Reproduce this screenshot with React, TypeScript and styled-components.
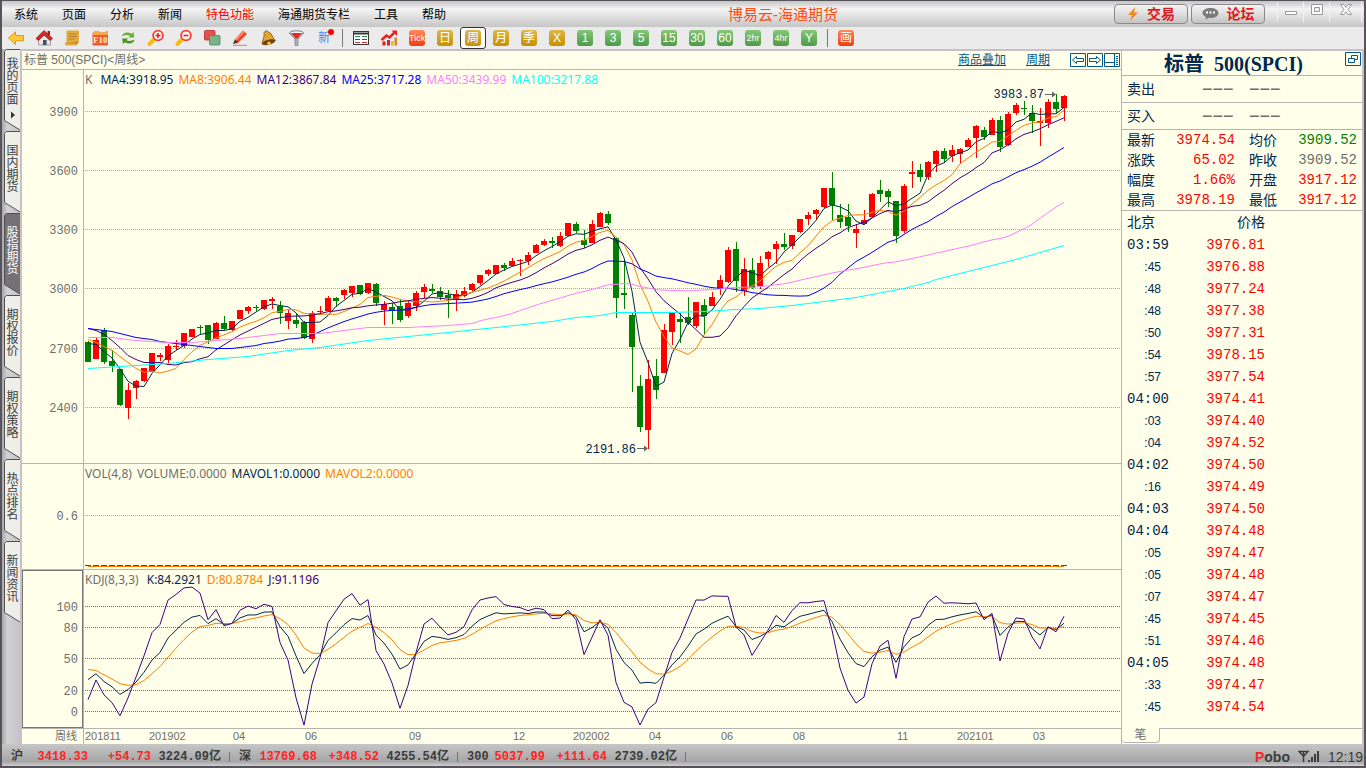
import React from "react";
import styled, { createGlobalStyle, css } from "styled-components";

const CJK = `"Noto Sans CJK SC"`;
const SANS = `"Liberation Sans", ${CJK}, sans-serif`;
const MONO = `"Liberation Mono", ${CJK}, monospace`;
const LEGEND = `"Noto Sans", ${CJK}, sans-serif`;

const color = {
  paper: "#ffffea",
  rule: "#b4b4b4",
  navy: "#002850",
  orange: "#ff8000",
  purple: "#400080",
  blue: "#0000ff",
  pink: "#ff80ff",
  cyan: "#00ffff",
  red: "#ff0000",
  green: "#008000",
  grey: "#6e6e6e",
  link: "#005a8c",
};

const GlobalStyle = createGlobalStyle`
  *, *::before, *::after { box-sizing: border-box; }
  body { margin: 0; background: #555; font-family: ${SANS}; }
  button { font: inherit; color: inherit; background: none; border: 0; padding: 0; cursor: pointer; }
  svg { display: block; }
`;

/* ---------- window frame ---------- */

const Frame = styled.div`
  min-height: 100vh;
  display: flex;
  flex-direction: column;
  border: 2px solid #56545a;
  border-top-width: 1px;
  background: #c8c8ca;
`;

const TitleBar = styled.header`
  display: flex;
  height: 26px;
  align-items: center;
  background: linear-gradient(#c4c4c4, #f4f4f4 30%, #e4e4e4 55%, #c6c6c6);
`;

const Menu = styled.nav`
  display: flex;
  gap: 24px;
  padding: 2px 0 0 12px;
  font: 12px/16px ${SANS};
`;

const MenuItem = styled.button<{ $hot?: boolean }>`
  color: ${(p) => (p.$hot ? color.red : "#000")};
  white-space: nowrap;
`;

const AppTitle = styled.h1`
  flex: 1;
  margin: 0;
  padding: 2px 0 0 6px;
  text-align: center;
  font: 15px/20px ${SANS};
  color: #ff4f10;
`;

const TitleActions = styled.div`
  display: flex;
  gap: 3px;
`;

const ActionButton = styled.button`
  && {
    display: flex;
    align-items: center;
    justify-content: center;
    gap: 8px;
    width: 74px;
    height: 20px;
    border: 1px solid #8a8a8a;
    border-radius: 4px;
    background: linear-gradient(#f4f4f4, #dedede 50%, #c4c4c4);
    font: bold 14px/18px ${SANS};
    color: #e01818;
  }
`;

const WindowControls = styled.div`
  display: flex;
  height: 20px;
  align-self: flex-start;
  margin: 1px 2px 0 12px;
`;

const WindowButton = styled.button`
  && {
    display: flex;
    align-items: flex-start;
    justify-content: center;
    width: 26px;
    padding-top: 2px;
    border-left: 1px solid #f2f2f2;
  }
  &&:last-child {
    width: 33px;
    border-right: 1px solid #f2f2f2;
  }
`;

/* ---------- toolbar ---------- */

const Toolbar = styled.div`
  display: flex;
  height: 22px;
  gap: 2px;
  padding-left: 1px;
  background: #ebebeb;
`;

const Tool = styled.button<{ $active?: boolean }>`
  && {
    display: flex;
    width: 26px;
    height: 22px;
    align-items: center;
    justify-content: center;
    ${(p) =>
      p.$active &&
      css`
        border: 1px solid #333;
        border-radius: 3px;
        background: #fff;
      `}
  }
`;

const Divider = styled.span`
  width: 7px;
  height: 18px;
  margin-top: 2px;
  background: linear-gradient(#777, #777) center / 1px 100% no-repeat;
`;

const tileFill = {
  gold: "linear-gradient(#dcb848, #c89000)",
  green: "linear-gradient(#86c878, #4e9a48)",
  red: "linear-gradient(#ff8a5a, #ee3c14)",
};

const Tile = styled.span<{ $tone: keyof typeof tileFill; $small?: boolean }>`
  display: block;
  width: 16px;
  height: 16px;
  border-radius: 3px;
  overflow: hidden;
  background: ${(p) => tileFill[p.$tone]};
  color: #fff;
  font: ${(p) => (p.$small ? 9 : 12)}px/16px ${SANS};
  text-align: center;
  white-space: nowrap;
`;

const NewMark = styled.span`
  position: relative;
  font: 12px/16px ${SANS};
  color: #3c8cf0;
  &::after {
    content: "";
    position: absolute;
    top: -1px;
    right: -4px;
    width: 6px;
    height: 6px;
    border-radius: 50%;
    background: #ff0000;
  }
`;

/* ---------- workspace ---------- */

const Workspace = styled.div`
  flex: 1;
  display: flex;
`;

const SideTabs = styled.nav`
  width: 18px;
  padding-left: 2px;
  background: linear-gradient(90deg, #a8a8ac, #d2d2d4 30%, #c4c4c8);
`;

const SideTab = styled.button<{ $active?: boolean; $lift?: boolean }>`
  && {
    position: relative;
    display: flex;
    align-items: flex-start;
    width: 16px;
    height: 82px;
    padding-top: ${(p) => (p.$lift ? 8 : 13)}px;
    color: ${(p) => (p.$active ? "#fff" : "#404040")};
  }
  & > svg {
    position: absolute;
    inset: 0;
  }
`;

const SideLabel = styled.span`
  position: relative;
  display: block;
  writing-mode: vertical-rl;
  width: 16px;
  font: 12px/16px ${CJK}, sans-serif;
`;

const Content = styled.main`
  flex: 1;
  min-width: 0;
  display: flex;
  border: solid #c8c0c4;
  border-width: 2px 2px 0 2px;
  background: ${color.paper};
`;

const ChartColumn = styled.section`
  flex: 1;
  min-width: 0;
  display: flex;
  flex-direction: column;
  border-right: 1px solid ${color.rule};
`;

const ChartHeader = styled.div`
  display: flex;
  height: 19px;
  align-items: center;
  padding: 0 1px 0 2px;
  border-bottom: 1px solid ${color.rule};
  font: 12px/16px ${SANS};
  color: ${color.grey};
`;

const ChartName = styled.h2`
  flex: 1;
  margin: 0;
  font: 12px/16px ${SANS};
`;

const HeaderLink = styled.a`
  margin-right: 20px;
  color: ${color.link};
  text-decoration: underline;
`;

const LayoutButtons = styled.div`
  display: flex;
  gap: 1px;
`;

const Pane = styled.div<{ $ruled?: boolean }>`
  position: relative;
  border-bottom: ${(p) => (p.$ruled ? `1px solid ${color.rule}` : "0")};
`;

const Legend = styled.div`
  position: absolute;
  top: 2px;
  left: 63px;
  display: flex;
  gap: 5px;
  font: 12px/16px ${LEGEND};
  white-space: nowrap;
`;

const LegendItem = styled.span<{ $tone: string; $wide?: boolean }>`
  color: ${(p) => p.$tone};
  margin-right: ${(p) => (p.$wide ? "3px" : "0")};
`;

const Plot = styled.svg`
  width: 100%;
  overflow: hidden;
`;

const AxisText = styled.text`
  font: 12px ${MONO};
  fill: ${color.grey};
  text-anchor: end;
`;

const CalloutText = styled.text`
  font: 12px ${MONO};
  fill: ${color.navy};
  text-anchor: end;
`;

const DateText = styled.text`
  font: 11px ${SANS};
  fill: ${color.grey};
`;

/* ---------- quote panel ---------- */

const QuoteColumn = styled.aside`
  width: 240px;
  display: flex;
  flex-direction: column;
  color: ${color.navy};
`;

const QuoteHeader = styled.div`
  display: flex;
  height: 25px;
  align-items: flex-start;
  padding: 1px 1px 0 0;
  border-bottom: 1px solid ${color.rule};
`;

const QuoteTitle = styled.h2`
  flex: 1;
  margin: 0;
  text-align: center;
  white-space: pre;
  font: bold 20px/24px "Liberation Serif", ${CJK}, serif;
`;

const DepthRow = styled.div`
  display: flex;
  height: 27px;
  align-items: center;
  padding-left: 5px;
  border-bottom: 1px solid ${color.rule};
  font: 14px/20px ${SANS};
`;

const DepthLabel = styled.span`
  width: 75px;
`;

const DepthValue = styled.span`
  width: 47px;
  color: ${color.grey};
  font: 18px/20px ${SANS};
`;

const StatTable = styled.table`
  width: 100%;
  border-collapse: collapse;
  table-layout: fixed;
  border-bottom: 1px solid ${color.rule};
  th,
  td {
    height: 20px;
    padding: 0;
    line-height: 20px;
  }
  th {
    padding-left: 5px;
    text-align: left;
    font: 14px/20px ${SANS};
  }
  th + td + th {
    padding-left: 14px;
  }
  td:last-child {
    padding-right: 5px;
  }
`;

const StatValue = styled.td<{ $tone: string }>`
  text-align: right;
  font: 14px/20px ${MONO};
  color: ${(p) => p.$tone};
`;

const TickTable = styled.table`
  align-self: flex-start;
  border-collapse: collapse;
  th,
  td {
    height: 22px;
    padding: 0;
  }
  th {
    font: 14px/22px ${SANS};
  }
  th:first-child {
    width: 47px;
    padding-left: 5px;
    text-align: left;
  }
  th:last-child {
    width: 96px;
    text-align: right;
  }
`;

const TickTime = styled.td<{ $minute?: boolean }>`
  && {
    padding: 2px ${(p) => (p.$minute ? "0" : "8px")} 0 5px;
  }
  text-align: ${(p) => (p.$minute ? "left" : "right")};
  font: ${(p) => (p.$minute ? `14px/20px ${MONO}` : `12px/20px ${SANS}`)};
`;

const TickPrice = styled.td`
  && {
    padding-top: 2px;
  }
  text-align: right;
  font: 14px/20px ${MONO};
  color: ${color.red};
`;

const BottomTabs = styled.div`
  display: flex;
  margin-top: auto;
  height: 16px;
  &::after {
    content: "";
    flex: 1;
    border-top: 1px solid ${color.rule};
  }
`;

const BottomTab = styled.button`
  && {
    width: 38px;
    height: 15px;
    border: solid ${color.rule};
    border-width: 0 1px 1px 0;
    border-radius: 0 0 4px 4px;
    color: ${color.grey};
    font: 12px/14px ${SANS};
  }
`;

/* ---------- status bar ---------- */

const StatusBar = styled.footer`
  display: flex;
  height: 22px;
  align-items: center;
  padding: 3px 1px 0 9px;
  background: linear-gradient(#c6c6c6, #a6a6a6 80%, #d0d0d0);
  color: #3c3c3c;
  font: bold 12px/18px ${MONO};
  white-space: nowrap;
`;

const IndexGroup = styled.div`
  display: flex;
  &::after {
    content: "";
    width: 1px;
    height: 10px;
    margin: 4px 9px 0 8px;
    background: #777;
  }
`;

const IndexCell = styled.span<{ $w: number; $up?: boolean }>`
  width: ${(p) => p.$w}px;
  text-align: right;
  color: ${(p) => (p.$up ? "#ff2424" : "#3c3c3c")};
  &:first-child {
    text-align: left;
  }
`;

const StatusRight = styled.div`
  display: flex;
  align-items: center;
  gap: 8px;
  margin-left: auto;
`;

const Brand = styled.span`
  font: bold 14px/18px ${SANS};
  &::first-letter {
    color: #ff2424;
  }
  display: inline-block;
`;

const Clock = styled.time`
  font: 14px/18px ${SANS};
`;

/* ---------- data ---------- */

type Candle = [dir: "u" | "d", top: number, bottom: number, high: number, low: number];

// Weekly candles in plot rows (smaller is higher); u closes at the body top, d at its bottom.
const candles: Candle[] = [
  ["d", 342, 362, 341, 362], ["u", 340, 359, 337, 359], ["d", 330, 362, 328, 364], ["d", 361, 366, 350, 372],
  ["d", 369, 405, 369, 406], ["u", 390, 408, 383, 419], ["u", 381, 388, 380, 399], ["u", 368, 381, 368, 382],
  ["u", 353, 372, 353, 372], ["u", 355, 357, 353, 361], ["u", 346, 360, 344, 363], ["u", 346, 347, 340, 350],
  ["u", 333, 346, 333, 348], ["u", 329, 337, 329, 337], ["d", 327, 328, 325, 334], ["d", 325, 340, 325, 344],
  ["u", 323, 339, 322, 339], ["d", 323, 329, 316, 330], ["u", 321, 330, 321, 331], ["u", 310, 319, 310, 319],
  ["u", 307, 311, 306, 314], ["d", 307, 308, 305, 311], ["u", 300, 309, 300, 310], ["u", 299, 301, 297, 309],
  ["d", 306, 313, 301, 324], ["u", 313, 321, 310, 329], ["d", 320, 324, 314, 328], ["d", 322, 338, 321, 339],
  ["u", 313, 339, 311, 343], ["u", 311, 312, 306, 314], ["u", 298, 311, 296, 311], ["d", 298, 301, 297, 307],
  ["u", 290, 295, 289, 299], ["u", 286, 293, 286, 297], ["d", 285, 294, 285, 295], ["u", 283, 293, 283, 294],
  ["d", 284, 303, 283, 306], ["u", 304, 310, 301, 325], ["d", 307, 311, 303, 324], ["d", 306, 320, 300, 322],
  ["u", 303, 316, 300, 318], ["u", 293, 306, 291, 311], ["u", 287, 292, 284, 298], ["d", 289, 291, 284, 293],
  ["d", 291, 297, 287, 300], ["d", 295, 298, 290, 318], ["u", 294, 300, 290, 311], ["u", 291, 296, 287, 297],
  ["u", 284, 290, 283, 291], ["u", 275, 283, 275, 285], ["u", 270, 274, 269, 276], ["u", 265, 274, 265, 274],
  ["d", 265, 268, 263, 271], ["u", 261, 266, 258, 266], ["u", 260, 261, 259, 276], ["u", 255, 261, 252, 265],
  ["u", 245, 253, 244, 253], ["u", 241, 245, 239, 246], ["d", 241, 243, 237, 248], ["u", 236, 246, 232, 247],
  ["u", 223, 236, 223, 236], ["d", 224, 231, 222, 233], ["d", 240, 245, 230, 248], ["u", 224, 243, 220, 243],
  ["u", 213, 227, 212, 227], ["d", 214, 223, 211, 225], ["d", 238, 298, 237, 318], ["d", 293, 295, 260, 309],
  ["d", 315, 347, 312, 392], ["d", 386, 427, 375, 432], ["u", 379, 430, 360, 449], ["d", 376, 390, 359, 399],
  ["u", 330, 373, 324, 373], ["u", 313, 332, 313, 345], ["d", 319, 322, 313, 343], ["d", 317, 323, 297, 325],
  ["u", 302, 326, 302, 328], ["d", 305, 316, 299, 335], ["u", 297, 306, 292, 306], ["u", 280, 289, 275, 295],
  ["u", 250, 282, 247, 283], ["d", 249, 281, 242, 292], ["u", 269, 291, 258, 296], ["d", 270, 288, 258, 289],
  ["u", 263, 286, 256, 289], ["u", 252, 259, 251, 267], ["u", 244, 249, 241, 264], ["d", 244, 247, 233, 250],
  ["u", 235, 246, 235, 249], ["u", 219, 232, 219, 233], ["u", 215, 219, 212, 225], ["u", 210, 214, 209, 219],
  ["u", 188, 207, 188, 208], ["d", 188, 205, 172, 220], ["d", 215, 222, 204, 228], ["d", 217, 226, 204, 232],
  ["u", 229, 233, 224, 248], ["u", 220, 224, 210, 224], ["u", 194, 217, 193, 217], ["d", 190, 194, 180, 202],
  ["d", 191, 197, 189, 207], ["d", 201, 236, 201, 243], ["u", 186, 231, 184, 233], ["u", 172, 174, 161, 188],
  ["d", 170, 177, 164, 182], ["u", 162, 177, 161, 180], ["u", 151, 164, 150, 172], ["d", 151, 159, 148, 163],
  ["u", 150, 156, 145, 162], ["u", 149, 154, 148, 163], ["u", 140, 147, 138, 147], ["u", 126, 138, 125, 158],
  ["d", 130, 137, 127, 140], ["u", 120, 135, 118, 135], ["d", 120, 147, 116, 152], ["u", 114, 145, 112, 146],
  ["u", 105, 113, 103, 115], ["d", 108, 109, 101, 115], ["d", 113, 121, 105, 133], ["u", 121, 123, 108, 146],
  ["u", 102, 123, 99, 128], ["d", 102, 109, 94, 113], ["u", 96, 108, 95, 121],
];

type Point = [index: number, y: number];

const PRICE_TOP = 70;
const KDJ_TOP = 570;
const slotX = (i: number) => 66 + 8 * i;
const closes = candles.map(([dir, top, bottom]) => (dir === "u" ? top : bottom));

const toPath = (points: Point[], offset: number) =>
  points.map(([i, y]) => `${slotX(i)},${(y - offset + 0.5).toFixed(1)}`).join(" ");

// Averages whose window reaches before the first candle start from a stored lead-in.
const movingAverage = (span: number, lead: Point[]): Point[] => {
  const out = [...lead];
  for (let i = span - 1; i < closes.length; i++) {
    const sum = closes.slice(i - span + 1, i + 1).reduce((a, b) => a + b, 0);
    out.push([i, sum / span]);
  }
  return out;
};

const lead = (...ys: number[]): Point[] => ys.map((y, i) => [i, y]);

const averages: { tone: string; points: Point[] }[] = [
  { tone: color.navy, points: movingAverage(4, lead(343, 344, 351)) },
  { tone: color.orange, points: movingAverage(8, lead(339, 342, 346, 350, 356, 362, 368)) },
  { tone: color.purple, points: movingAverage(12, lead(328, 330, 334, 340, 347, 355, 359, 362, 362, 362, 364)) },
  {
    tone: color.blue,
    points: movingAverage(
      25,
      lead(328, 329, 330, 331, 333, 335, 337, 338, 339, 341, 342, 343, 344, 345, 346, 347, 348, 348, 348, 347, 346, 345, 343, 342),
    ),
  },
  {
    tone: color.pink,
    points: movingAverage(50, [
      [0, 337], [3, 337], [6, 340], [10, 342], [13, 342], [16, 340], [19, 338], [21, 336],
      [24, 333], [29, 333], [32, 330], [35, 327], [40, 327], [45, 325], [48, 323],
    ]),
  },
  {
    tone: color.cyan,
    points: [
      [0, 368], [4, 366], [10, 363], [15, 359], [20, 356], [25, 350], [29, 347], [35, 340], [40, 336],
      [45, 332], [51, 327], [58, 321], [61, 317], [64, 315], [66, 312], [73, 312], [77, 311], [81, 309],
      [84, 308], [88, 305], [92, 301], [96, 297], [100, 291], [102, 288], [105, 282], [106, 279],
      [110, 271], [116, 259], [122, 245],
    ],
  },
];

const kdj = (() => {
  const k = [30.4, 36, 28.6, 23.5, 16.3, 21, 28];
  const d = [40, 39, 35, 31, 26.5, 25, 25.6];
  for (let i = k.length; i < candles.length; i++) {
    const span = candles.slice(Math.max(0, i - 7), i + 1);
    const high = Math.min(...span.map((c) => c[3]));
    const low = Math.max(...span.map((c) => c[4]));
    const rsv = ((low - closes[i]) / (low - high)) * 100;
    k.push((2 * k[i - 1] + rsv) / 3);
    d.push((2 * d[i - 1] + k[i]) / 3);
  }
  const scale = (v: number) => 711 - v * 1.05;
  return {
    k: k.map((v, i): Point => [i, scale(v)]),
    d: d.map((v, i): Point => [i, scale(v)]),
    j: k.map((v, i): Point => [i, scale(3 * v - 2 * d[i])]),
  };
})();

const menuItems = ["系统", "页面", "分析", "新闻", "特色功能", "海通期货专栏", "工具", "帮助"];
const sideTabs = ["我的页面", "国内期货", "股指期货", "期权报价", "期权策略", "热点排名", "新闻资讯"];
const priceGrid: [string, number][] = [["3900", 111], ["3600", 170], ["3300", 229], ["3000", 288], ["2700", 348], ["2400", 407]];
const kdjGrid: [string, number][] = [["100", 606], ["80", 627], ["50", 658], ["20", 690], ["0", 711]];
const dates: [string, number][] = [
  ["201811", 63], ["201902", 127], ["04", 211], ["06", 283], ["09", 387], ["12", 491], ["202002", 551],
  ["04", 627], ["06", 699], ["08", 771], ["11", 875], ["202101", 935], ["03", 1011],
];
const stats: [string, string, string, string, string, string][] = [
  ["最新", "3974.54", color.red, "均价", "3909.52", color.green],
  ["涨跌", "65.02", color.red, "昨收", "3909.52", color.grey],
  ["幅度", "1.66%", color.red, "开盘", "3917.12", color.red],
  ["最高", "3978.19", color.red, "最低", "3917.12", color.red],
];
const ticks: [string, string][] = [
  ["03:59", "3976.81"], [":45", "3976.88"], [":48", "3977.24"], [":48", "3977.38"], [":50", "3977.31"],
  [":54", "3978.15"], [":57", "3977.54"], ["04:00", "3974.41"], [":03", "3974.40"], [":04", "3974.52"],
  ["04:02", "3974.50"], [":16", "3974.49"], ["04:03", "3974.50"], ["04:04", "3974.48"], [":05", "3974.47"],
  [":05", "3974.48"], [":07", "3974.47"], [":45", "3974.45"], [":51", "3974.46"], ["04:05", "3974.48"],
  [":33", "3974.47"], [":45", "3974.54"],
];

/* ---------- toolbar icons ---------- */

const Icon = ({ children }: { children: React.ReactNode }) => (
  <svg width="18" height="18" viewBox="0 0 18 18" aria-hidden="true">
    {children}
  </svg>
);

const Magnifier = ({ plus }: { plus?: boolean }) => (
  <Icon>
    <path d="M6.500 11 2.500 15" stroke="#f8bc10" strokeWidth="4" strokeLinecap="round" />
    <circle cx="11" cy="6.500" r="4.900" fill="#fff0ec" stroke="#f04038" strokeWidth="1.800" />
    <path d={plus ? "M8.500 6.500h5M11 4v5" : "M8.500 6.500h5"} stroke="#e42018" strokeWidth="1.500" />
  </Icon>
);

const pictureTools: [string, React.ReactNode][] = [
  ["后退", <Icon><path d="M1.500 9 8.500 2.800V6.500H16.500V11.800H8.500V15.500Z" fill="#ffc838" stroke="#d89c18" /></Icon>],
  ["主页", (
    <Icon>
      <path d="M3.500 9v7h12V9L9.500 4.500Z" fill="#e4e6ec" stroke="#8a8e98" strokeWidth=".8" />
      <path d="M12.500 2h2.500v4h-2.500z" fill="#b01818" />
      <path d="M1 9.500 9 1.500l8.500 8-2.500 2-6-5.500-5.500 5.500Z" fill="#d42828" stroke="#8c1010" strokeWidth=".7" />
      <path d="M8 11h3.600v5H8z" fill="#4a5260" />
    </Icon>
  )],
  ["公告", (
    <Icon>
      <path d="M3.500 1.500h12.500v11l-3 4H2.500L1.800 14l1.700-1.500Z" fill="#e4ac40" />
      <path d="M5.500 5h8.500M5.500 7.500h8.500M5.500 10h6" stroke="#b88020" />
      <path d="M2 14.500h10.500l.5 2 3-4h-3Z" fill="#c88c24" />
    </Icon>
  )],
  ["F10", (
    <Icon>
      <rect x="1.500" y="3.500" width="15.500" height="13" rx="1" fill="#f05830" />
      <path d="M2 3.500 3.500 2H8l1 1.500h5L15 2h2v4H2Z" fill="#f8a848" />
      <text x="9.300" y="13.500" textAnchor="middle" fontFamily="Liberation Serif" fontWeight="bold" fontSize="9" fill="#fff0b8">F10</text>
    </Icon>
  )],
  ["刷新", (
    <Icon>
      <path d="M3 7.500C3.500 3.500 9 2.500 12.500 4.800L14.500 3l.8 5.500H9.500l1.500-1.700C8.500 5.500 5.500 6 3 7.500Z" fill="#68b030" />
      <path d="M15.500 10.500c-.5 4-6 5-9.500 2.700L4 15l-.8-5.500H9l-1.500 1.700c2.500 1.300 5.500.800 8-.7Z" fill="#489818" />
    </Icon>
  )],
  ["放大", <Magnifier plus />],
  ["缩小", <Magnifier />],
  ["叠加", (
    <Icon>
      <rect x="1.500" y="1.500" width="10.500" height="9.500" rx="1" fill="#e85050" stroke="#b82828" strokeWidth=".8" />
      <rect x="6.500" y="6.500" width="10.500" height="9.500" rx="1" fill="#78b488" stroke="#4c8858" strokeWidth=".8" />
    </Icon>
  )],
  ["画线", (
    <Icon>
      <path d="M2.500 14.500 4 10.500 12 1.500l4 3.500L7.500 13.500Z" fill="#ec4830" />
      <path d="m2 15 2-4.500 3.500 3Z" fill="#4c342c" />
      <path d="m5 11 8-8.500" stroke="#ff9c84" strokeWidth="1.200" />
      <path d="M2 16.300h14" stroke="#f07070" />
    </Icon>
  )],
  ["预警", (
    <Icon>
      <path d="M5 3.500C6 1.500 8.500 1.500 9.500 3c4 1 3 5.500 7 8.500L3.500 15.500C2 13 6 9 5 3.500Z" fill="#e4a430" stroke="#7c5010" strokeWidth=".8" />
      <ellipse cx="9.800" cy="13.200" rx="6.500" ry="2.600" transform="rotate(-14 9.800 13.200)" fill="#70400c" />
      <circle cx="10" cy="14.200" r="1.800" fill="#f0c050" />
    </Icon>
  )],
  ["筛选", (
    <Icon>
      <path d="M2.500 4h14l-5.500 6v6.500H8V10Z" fill="#b0b4ba" stroke="#74787e" strokeWidth=".7" />
      <ellipse cx="9.500" cy="3.800" rx="6.800" ry="2" fill="#f4f4f4" stroke="#74787e" />
      <path d="M4.500 4h10l-4 5.500h-2Z" fill="#e82828" />
    </Icon>
  )],
  ["新", <NewMark>新</NewMark>],
];

const ListIcon = (
  <Icon>
    <rect x="1.500" y="2.500" width="15" height="13" fill="#fff" stroke="#383838" />
    <path d="M2 4.500h14" stroke="#383838" strokeWidth="2" />
    <path d="M3 7.500h5M10 7.500h5" stroke="#2c9050" />
    <path d="M3 10.500h5M10 10.500h5" stroke="#3848a8" />
    <path d="M3 13.500h5M10 13.500h5" stroke="#d83030" />
  </Icon>
);

const TrendIcon = (
  <Icon>
    <path d="M2.500 12.500h3v4h-3zM7 11h3v5.500H7z" fill="#d42424" />
    <path d="M11 12h2.500v4.500H11z" fill="#e8b428" />
    <path d="M14.500 8.500H17v8h-2.500z" fill="#d88428" />
    <path d="m1.500 11 5-4.500 3 2 5-5" fill="none" stroke="#ec2020" strokeWidth="2.500" />
    <path d="M11.500 1.500H17V7Z" fill="#ec2020" />
  </Icon>
);

const goldTiles = ["日", "周", "月", "季", "X"];
const greenTiles = ["1", "3", "5", "15", "30", "60", "2hr", "4hr", "Y"];

/* ---------- chart parts ---------- */

const Grid = ({ rows, offset, stroke }: { rows: [string, number][]; offset: number; stroke: string }) => (
  <g shapeRendering="crispEdges">
    {rows.map(([label, y]) => (
      <React.Fragment key={label}>
        <AxisText x={56} y={y - offset + 5}>{label}</AxisText>
        <line x1={63} x2="100%" y1={y - offset + 0.5} y2={y - offset + 0.5} stroke={stroke} strokeDasharray="1 1" />
      </React.Fragment>
    ))}
    <line x1={61.5} x2={61.5} y1={0} y2="100%" stroke={color.rule} />
  </g>
);

const Line = ({ points, tone, offset }: { points: Point[]; tone: string; offset: number }) => (
  <polyline points={toPath(points, offset)} fill="none" stroke={tone} />
);

const Arrow = ({ x, y }: { x: number; y: number }) => (
  <g>
    <path d={`M${x} ${y + 0.5}h10`} stroke="#666" />
    <path d={`M${x + 7} ${y - 2.5}l4 3-4 3Z`} fill="#666" />
  </g>
);

const PricePane = () => (
  <Pane $ruled>
    <Plot height={393}>
      <Grid rows={priceGrid} offset={PRICE_TOP} stroke="#a8a8a8" />
      <g shapeRendering="crispEdges">
        {candles.map(([dir, top, bottom, high, low], i) => (
          <g key={i} fill={dir === "u" ? color.red : color.green}>
            <rect x={slotX(i)} y={high - PRICE_TOP} width={1} height={low - high} />
            <rect x={slotX(i) - 3} y={top - PRICE_TOP} width={6} height={bottom - top} />
          </g>
        ))}
      </g>
      {averages.map((line) => (
        <Line key={line.tone} points={line.points} tone={line.tone} offset={PRICE_TOP} />
      ))}
      <CalloutText x={1022} y={28}>3983.87</CalloutText>
      <Arrow x={1023} y={24} />
      <CalloutText x={614} y={383}>2191.86</CalloutText>
      <Arrow x={615} y={378} />
    </Plot>
    <Legend>
      <LegendItem $tone={color.grey} $wide>K</LegendItem>
      <LegendItem $tone={color.navy}>MA4:3918.95</LegendItem>
      <LegendItem $tone={color.orange}>MA8:3906.44</LegendItem>
      <LegendItem $tone={color.purple}>MA12:3867.84</LegendItem>
      <LegendItem $tone={color.blue}>MA25:3717.28</LegendItem>
      <LegendItem $tone={color.pink}>MA50:3439.99</LegendItem>
      <LegendItem $tone={color.cyan}>MA100:3217.88</LegendItem>
    </Legend>
  </Pane>
);

const VolumePane = () => (
  <Pane $ruled>
    <Plot height={105}>
      <Grid rows={[["0.6", 51]]} offset={0} stroke="#a8a8a8" />
      <g shapeRendering="crispEdges">
        {candles.map(([dir], i) => (
          <rect key={i} x={slotX(i) - 3} y={101} width={6} height={1} fill={dir === "u" ? color.red : color.green} />
        ))}
        <rect x={slotX(0)} y={102} width={slotX(candles.length - 1) - slotX(0)} height={1} fill={color.orange} />
      </g>
    </Plot>
    <Legend>
      <LegendItem $tone={color.grey}>VOL(4,8)</LegendItem>
      <LegendItem $tone={color.grey}>VOLUME:0.0000</LegendItem>
      <LegendItem $tone={color.navy}>MAVOL1:0.0000</LegendItem>
      <LegendItem $tone={color.orange}>MAVOL2:0.0000</LegendItem>
    </Legend>
  </Pane>
);

const KdjPane = () => (
  <Pane $ruled>
    <Plot height={158}>
      <rect x={0.5} y={0.5} width={60} height={157} fill="none" stroke="#777" />
      <Grid rows={kdjGrid} offset={KDJ_TOP} stroke="#707070" />
      <Line points={kdj.k} tone={color.navy} offset={KDJ_TOP} />
      <Line points={kdj.d} tone={color.orange} offset={KDJ_TOP} />
      <Line points={kdj.j} tone={color.purple} offset={KDJ_TOP} />
    </Plot>
    <Legend>
      <LegendItem $tone={color.grey} $wide>KDJ(8,3,3)</LegendItem>
      <LegendItem $tone={color.navy}>K:84.2921</LegendItem>
      <LegendItem $tone={color.orange}>D:80.8784</LegendItem>
      <LegendItem $tone={color.purple}>J:91.1196</LegendItem>
    </Legend>
  </Pane>
);

const DateAxis = () => (
  <Pane>
    <Plot height={15}>
      <line x1={61.5} x2={61.5} y1={0} y2={15} stroke={color.rule} />
      <DateText x={33} y={11}>周线</DateText>
      {dates.map(([label, x]) => (
        <DateText key={x} x={x} y={11}>{label}</DateText>
      ))}
    </Plot>
  </Pane>
);

const BoxIcon = ({ d }: { d: string }) => (
  <svg width="16" height="14" viewBox="0 0 16 14" aria-hidden="true">
    <path d={`M.5.5h15v13H.5Z${d}`} fill="none" stroke={color.link} />
  </svg>
);

export default function App() {
  return (
    <Frame>
      <GlobalStyle />
      <TitleBar>
        <Menu>
          {menuItems.map((item) => (
            <MenuItem key={item} $hot={item === "特色功能"}>{item}</MenuItem>
          ))}
        </Menu>
        <AppTitle>博易云-海通期货</AppTitle>
        <TitleActions>
          <ActionButton>
            <svg width="12" height="14" viewBox="0 0 12 14" aria-hidden="true">
              <path d="M8.500 0 1 8h4L3 14l8-8.500H7Z" fill="#f08c18" />
            </svg>
            交易
          </ActionButton>
          <ActionButton>
            <svg width="17" height="14" viewBox="0 0 17 14" aria-hidden="true">
              <path d="M8.500 1C13 1 16.500 3 16.500 6S13 11 8.500 11q-1 0-2-.2L3.500 13l.5-3C2 9 .5 7.700.5 6 .5 3 4 1 8.500 1Z" fill="#7c7c7c" />
              <path d="M4 5.500h2M7.500 5.500h2M11 5.500h2" stroke="#fff" strokeWidth="2" />
            </svg>
            论坛
          </ActionButton>
        </TitleActions>
        <WindowControls>
          <WindowButton aria-label="最小化">
            <svg width="14" height="12" viewBox="0 0 14 12"><path d="M1.500 7.500h11v3h-11z" fill="#fff" stroke="#999" /></svg>
          </WindowButton>
          <WindowButton aria-label="最大化">
            <svg width="14" height="12" viewBox="0 0 14 12"><path d="M1.500.5h11v10h-11zM4.500 3.500h5v4h-5z" fill="#fff" fillRule="evenodd" stroke="#999" /></svg>
          </WindowButton>
          <WindowButton aria-label="关闭">
            <svg width="14" height="12" viewBox="0 0 14 12"><path d="M1.500.5h3.500l2 3 2-3h3.500l-3.500 5 3.500 5H9l-2-3-2 3H1.500l3.500-5Z" fill="#fff" stroke="#999" /></svg>
          </WindowButton>
        </WindowControls>
      </TitleBar>

      <Toolbar>
        {pictureTools.map(([name, icon]) => (
          <Tool key={name} aria-label={name}>{icon}</Tool>
        ))}
        <Divider />
        <Tool aria-label="报价">{ListIcon}</Tool>
        <Tool aria-label="走势">{TrendIcon}</Tool>
        <Tool><Tile $tone="red" $small>Tick</Tile></Tool>
        {goldTiles.map((t) => (
          <Tool key={t} $active={t === "周"}><Tile $tone="gold">{t}</Tile></Tool>
        ))}
        {greenTiles.map((t) => (
          <Tool key={t}><Tile $tone="green" $small={t.length > 2}>{t}</Tile></Tool>
        ))}
        <Divider />
        <Tool><Tile $tone="red">画</Tile></Tool>
      </Toolbar>

      <Workspace>
        <SideTabs>
          {sideTabs.map((tab, i) => {
            const active = tab === "股指期货";
            return (
              <SideTab key={tab} $active={active} $lift={i === 0}>
                <svg width="16" height="82" viewBox="0 0 16 82" aria-hidden="true">
                  <path d="M.5 71.500V2.500L2.500.5H16V81Z" fill={active ? "#747274" : "#efefea"} />
                  <path d="M16 81 .5 71.500V2.500L2.500.5H16" fill="none" stroke="#505050" />
                  {i === 0 && <path d="M7 62.500v7l4-3.500Z" fill="#333" />}
                </svg>
                <SideLabel>{tab}</SideLabel>
              </SideTab>
            );
          })}
        </SideTabs>

        <Content>
          <ChartColumn>
            <ChartHeader>
              <ChartName>标普 500(SPCI)&lt;周线&gt;</ChartName>
              <HeaderLink href="#overlay">商品叠加</HeaderLink>
              <HeaderLink href="#period">周期</HeaderLink>
              <LayoutButtons>
                <button aria-label="上一个"><BoxIcon d="M2.500 7 6.500 3.500V5.500H13.500V8.500H6.500V10.500Z" /></button>
                <button aria-label="下一个"><BoxIcon d="M13.500 7 9.500 3.500V5.500H2.500V8.500H9.500V10.500Z" /></button>
                <button aria-label="布局"><BoxIcon d="M10.500.5V13M.5 9.500H10M12 3.500h2M12 5.500h2M12 7.500h2M12 9.500h2M12 11.500h2" /></button>
              </LayoutButtons>
            </ChartHeader>
            <PricePane />
            <VolumePane />
            <KdjPane />
            <DateAxis />
          </ChartColumn>

          <QuoteColumn>
            <QuoteHeader>
              <QuoteTitle>{"标普  500(SPCI)"}</QuoteTitle>
              <button aria-label="弹出">
                <BoxIcon d="M6.500 6V3.500H12.500V7.500H9.500M3.500 6.500H9.500V10.500H3.500Z" />
              </button>
            </QuoteHeader>
            {["卖出", "买入"].map((label) => (
              <DepthRow key={label}>
                <DepthLabel>{label}</DepthLabel>
                <DepthValue>−−−</DepthValue>
                <DepthValue>−−−</DepthValue>
              </DepthRow>
            ))}
            <StatTable>
              <colgroup>
                <col width="40" />
                <col width="73" />
                <col width="50" />
                <col />
              </colgroup>
              <tbody>
                {stats.map(([a, av, at, b, bv, bt]) => (
                  <tr key={a}>
                    <th scope="row">{a}</th>
                    <StatValue $tone={at}>{av}</StatValue>
                    <th scope="row">{b}</th>
                    <StatValue $tone={bt}>{bv}</StatValue>
                  </tr>
                ))}
              </tbody>
            </StatTable>
            <TickTable>
              <thead>
                <tr>
                  <th scope="col">北京</th>
                  <th scope="col">价格</th>
                </tr>
              </thead>
              <tbody>
                {ticks.map(([time, price], i) => (
                  <tr key={i}>
                    <TickTime $minute={time.length > 3}>{time}</TickTime>
                    <TickPrice>{price}</TickPrice>
                  </tr>
                ))}
              </tbody>
            </TickTable>
            <BottomTabs>
              <BottomTab>笔</BottomTab>
            </BottomTabs>
          </QuoteColumn>
        </Content>
      </Workspace>

      <StatusBar>
        <IndexGroup>
          <IndexCell $w={12}>沪</IndexCell>
          <IndexCell $w={65} $up>3418.33</IndexCell>
          <IndexCell $w={63} $up>+54.73</IndexCell>
          <IndexCell $w={70}>3224.09亿</IndexCell>
        </IndexGroup>
        <IndexGroup>
          <IndexCell $w={12}>深</IndexCell>
          <IndexCell $w={66} $up>13769.68</IndexCell>
          <IndexCell $w={62} $up>+348.52</IndexCell>
          <IndexCell $w={70}>4255.54亿</IndexCell>
        </IndexGroup>
        <IndexGroup>
          <IndexCell $w={22}>300</IndexCell>
          <IndexCell $w={56} $up>5037.99</IndexCell>
          <IndexCell $w={62} $up>+111.64</IndexCell>
          <IndexCell $w={70}>2739.02亿</IndexCell>
        </IndexGroup>
        <StatusRight>
          <Brand>Pobo</Brand>
          <svg width="22" height="14" viewBox="0 0 22 14" aria-hidden="true">
            <path d="M1 1.500h9L5.500 6.500ZM5.500 1v11" fill="none" stroke="#3c3c3c" strokeWidth="1.500" />
            <path d="M10 10h2v2h-2zM13 7h2v5h-2zM16 4h2v8h-2zM19 1h2v11h-2z" fill="#3c3c3c" />
          </svg>
          <Clock>12:19</Clock>
        </StatusRight>
      </StatusBar>
    </Frame>
  );
}
